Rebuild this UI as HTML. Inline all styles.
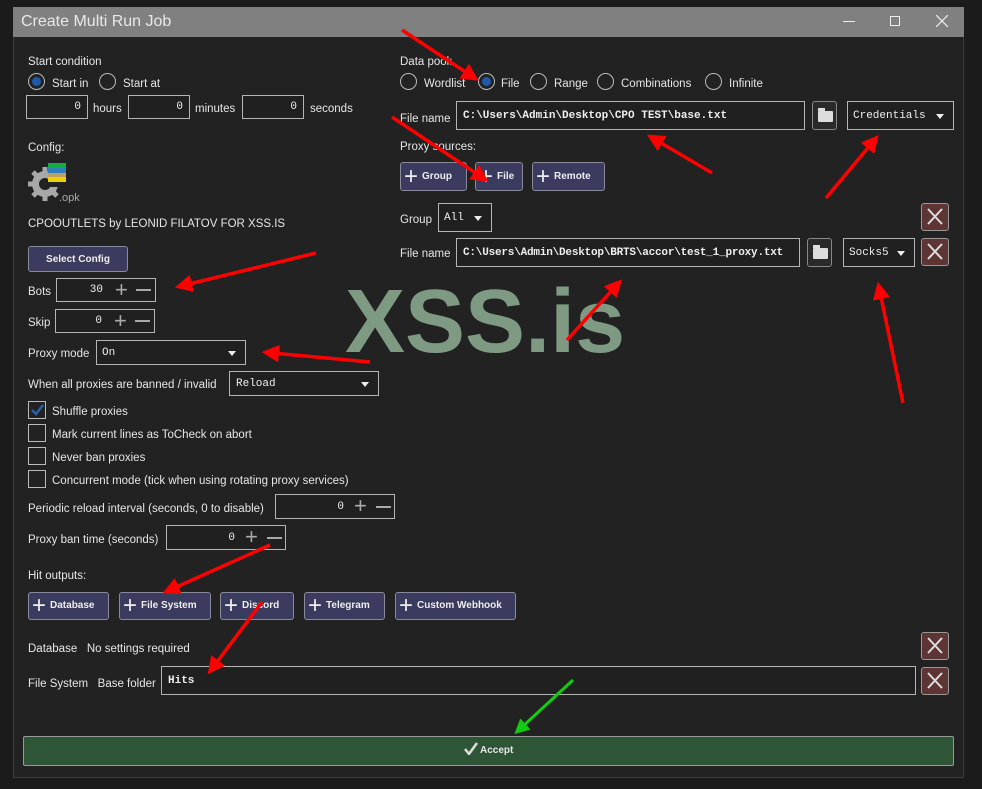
<!DOCTYPE html>
<html><head><meta charset="utf-8"><style>
*{box-sizing:border-box;margin:0;padding:0}
body{width:982px;height:789px;background:#1b1b1b;position:relative;overflow:hidden;font-family:"Liberation Sans",sans-serif;font-size:11.5px;color:#e6e6e6}
.a{position:absolute}
.win{left:13px;top:7px;width:951px;height:771px;background:#222;border:1px solid #3c3c3c}
.title{left:13px;top:7px;width:951px;height:30px;background:#808080;color:#e8e8e8;font-size:16px;line-height:30px;padding-left:8px}
.lbl{position:absolute;white-space:nowrap;line-height:14px;margin-top:1px}
.inp{position:absolute;border:1px solid #b5b5b5;background:#202020;font-family:"Liberation Mono",monospace;font-size:11px;color:#eee;white-space:nowrap;display:flex;align-items:center}
.rad{position:absolute;width:17px;height:17px;border:1px solid #bbb;border-radius:50%}
.rad.on::after{content:"";position:absolute;left:3px;top:3px;width:9px;height:9px;border-radius:50%;background:#1e5aa8}
.chk{position:absolute;width:18px;height:18px;border:1px solid #bbb}
.btn{position:absolute;background:#3b3a5f;border:1px solid #8a8a9a;border-radius:3px;color:#eee;font-weight:bold;font-size:10px;line-height:26px;white-space:nowrap}
.btn b{font-size:24px;font-weight:normal;vertical-align:-5px;margin:0 4px 0 3px;line-height:10px}
.x{position:absolute;width:28px;height:28px;background:#5e3535;border:1px solid #999;border-radius:3px}
.fold{position:absolute;background:#2a2a2a;border:1px solid #888;border-radius:3px}
.fold i{position:absolute;left:5px;top:9px;width:15px;height:11px;background:#ddd;border-radius:1px}
.fold i::before{content:"";position:absolute;left:0;top:-3px;width:7px;height:3px;background:#ddd}
.sel::after{content:"";position:absolute;right:9px;top:50%;margin-top:-2px;border:4px solid transparent;border-top:5px solid #eee}
.pm{position:absolute;color:#aaa;font-size:22px;top:0;line-height:22px;font-family:"Liberation Sans",sans-serif}
.mn{position:absolute;width:15px;height:2px;background:#aaa;top:50%;margin-top:-1px}
.num{position:absolute;text-align:right}
</style></head><body>
<div class="a win"></div>
<div class="a title">Create Multi Run Job</div>
<div class="a" style="left:843px;top:21px;width:12px;height:1px;background:#eee"></div>
<div class="a" style="left:890px;top:16px;width:10px;height:10px;border:1px solid #eee"></div>
<svg class="a" style="left:936px;top:15px" width="12" height="12"><path d="M0,0 L12,12 M12,0 L0,12" stroke="#eee" stroke-width="1.2"/></svg>

<div class="lbl" style="left:28px;top:54px">Start condition</div>
<div class="rad on" style="left:28px;top:73px"></div><div class="lbl" style="left:52px;top:76px">Start in</div>
<div class="rad" style="left:99px;top:73px"></div><div class="lbl" style="left:123px;top:76px">Start at</div>
<div class="inp" style="left:26px;top:95px;width:62px;height:24px"><span class="num" style="right:6px">0</span></div><div class="lbl" style="left:93px;top:101px">hours</div>
<div class="inp" style="left:128px;top:95px;width:62px;height:24px"><span class="num" style="right:6px">0</span></div><div class="lbl" style="left:195px;top:101px">minutes</div>
<div class="inp" style="left:242px;top:95px;width:62px;height:24px"><span class="num" style="right:6px">0</span></div><div class="lbl" style="left:310px;top:101px">seconds</div>

<div class="lbl" style="left:28px;top:140px">Config:</div>
<svg class="a" style="left:27px;top:161px" width="54" height="42"><g fill="#a8a8a8"><circle cx="18" cy="23" r="13"/><g stroke="#a8a8a8" stroke-width="5"><line x1="18" y1="6" x2="18" y2="40"/><line x1="1" y1="23" x2="35" y2="23"/><line x1="6" y1="11" x2="30" y2="35"/><line x1="30" y1="11" x2="6" y2="35"/></g></g><circle cx="18" cy="23" r="6" fill="#222"/><rect x="22" y="10" width="16" height="16" fill="#222"/><rect x="21" y="2" width="18" height="5" fill="#10b040"/><rect x="21" y="7" width="18" height="5" fill="#3080c0"/><rect x="21" y="12" width="18" height="4" fill="#c0a060"/><rect x="21" y="16" width="18" height="5" fill="#f0d000"/><text x="32" y="40" fill="#a8a8a8" font-size="11" font-family="Liberation Sans">.opk</text></svg>
<div class="lbl" style="left:28px;top:216px">CPOOUTLETS by LEONID FILATOV FOR XSS.IS</div>
<div class="btn" style="left:28px;top:246px;width:100px;height:26px;text-align:center">Select Config</div>

<div class="lbl" style="left:28px;top:284px">Bots</div>
<div class="inp" style="left:56px;top:278px;width:100px;height:24px"><span class="num" style="right:52px">30</span><span class="pm" style="left:58px">+</span><span class="mn" style="left:79px"></span></div>
<div class="lbl" style="left:28px;top:315px">Skip</div>
<div class="inp" style="left:55px;top:309px;width:100px;height:24px"><span class="num" style="right:52px">0</span><span class="pm" style="left:58px">+</span><span class="mn" style="left:79px"></span></div>
<div class="lbl" style="left:28px;top:346px">Proxy mode</div>
<div class="inp sel" style="left:96px;top:340px;width:150px;height:25px;padding-left:5px">On</div>
<div class="lbl" style="left:28px;top:377px">When all proxies are banned / invalid</div>
<div class="inp sel" style="left:229px;top:371px;width:150px;height:25px;padding-left:6px">Reload</div>
<div class="chk" style="left:28px;top:401px"></div><svg class="a" style="left:31px;top:404px" width="13" height="12"><path d="M1,6 L5,10 L12,1" stroke="#2a5fb0" stroke-width="2.5" fill="none"/></svg><div class="lbl" style="left:52px;top:404px">Shuffle proxies</div>
<div class="chk" style="left:28px;top:424px"></div><div class="lbl" style="left:52px;top:427px">Mark current lines as ToCheck on abort</div>
<div class="chk" style="left:28px;top:447px"></div><div class="lbl" style="left:52px;top:450px">Never ban proxies</div>
<div class="chk" style="left:28px;top:470px"></div><div class="lbl" style="left:52px;top:473px">Concurrent mode (tick when using rotating proxy services)</div>
<div class="lbl" style="left:28px;top:501px">Periodic reload interval (seconds, 0 to disable)</div>
<div class="inp" style="left:275px;top:494px;width:120px;height:25px"><span class="num" style="right:50px">0</span><span class="pm" style="left:78px">+</span><span class="mn" style="left:100px"></span></div>
<div class="lbl" style="left:28px;top:532px">Proxy ban time (seconds)</div>
<div class="inp" style="left:166px;top:525px;width:120px;height:25px"><span class="num" style="right:50px">0</span><span class="pm" style="left:78px">+</span><span class="mn" style="left:100px"></span></div>

<div class="lbl" style="left:28px;top:568px">Hit outputs:</div>
<div class="btn" style="left:28px;top:592px;width:81px;height:28px"><b>+</b>Database</div>
<div class="btn" style="left:119px;top:592px;width:92px;height:28px"><b>+</b>File System</div>
<div class="btn" style="left:220px;top:592px;width:74px;height:28px"><b>+</b>Discord</div>
<div class="btn" style="left:304px;top:592px;width:81px;height:28px"><b>+</b>Telegram</div>
<div class="btn" style="left:395px;top:592px;width:121px;height:28px"><b>+</b>Custom Webhook</div>
<div class="lbl" style="left:28px;top:641px">Database&nbsp;&nbsp;&nbsp;No settings required</div>
<div class="x" style="left:921px;top:632px"></div>
<div class="lbl" style="left:28px;top:676px">File System&nbsp;&nbsp;&nbsp;Base folder</div>
<div class="inp" style="left:161px;top:666px;width:755px;height:29px;padding-left:6px;font-weight:bold">Hits</div>
<div class="x" style="left:921px;top:667px"></div>
<div class="a" style="left:23px;top:736px;width:931px;height:30px;background:#2f5537;border:1px solid #999;border-radius:2px;text-align:center;line-height:28px;font-weight:bold;font-size:10px"><svg width="14" height="13" style="vertical-align:-2px"><path d="M1,7 L5,12 L13,1" stroke="#ddd" stroke-width="2.5" fill="none"/></svg> Accept</div>

<div class="lbl" style="left:400px;top:54px">Data pool:</div>
<div class="rad" style="left:400px;top:73px"></div><div class="lbl" style="left:424px;top:76px">Wordlist</div>
<div class="rad on" style="left:478px;top:73px"></div><div class="lbl" style="left:501px;top:76px">File</div>
<div class="rad" style="left:530px;top:73px"></div><div class="lbl" style="left:554px;top:76px">Range</div>
<div class="rad" style="left:597px;top:73px"></div><div class="lbl" style="left:621px;top:76px">Combinations</div>
<div class="rad" style="left:705px;top:73px"></div><div class="lbl" style="left:729px;top:76px">Infinite</div>
<div class="lbl" style="left:400px;top:111px">File name</div>
<div class="inp" style="left:456px;top:101px;width:349px;height:29px;padding-left:6px;font-weight:bold">C:\Users\Admin\Desktop\CPO TEST\base.txt</div>
<div class="fold" style="left:812px;top:101px;width:25px;height:29px"><i></i></div>
<div class="inp sel" style="left:847px;top:101px;width:107px;height:29px;padding-left:5px">Credentials</div>
<div class="lbl" style="left:400px;top:139px">Proxy sources:</div>
<div class="btn" style="left:400px;top:162px;width:67px;height:29px;line-height:27px"><b>+</b>Group</div>
<div class="btn" style="left:475px;top:162px;width:48px;height:29px;line-height:27px"><b>+</b>File</div>
<div class="btn" style="left:532px;top:162px;width:73px;height:29px;line-height:27px"><b>+</b>Remote</div>
<div class="lbl" style="left:400px;top:212px">Group</div>
<div class="inp sel" style="left:438px;top:203px;width:54px;height:29px;padding-left:5px">All</div>
<div class="x" style="left:921px;top:203px"></div>
<div class="lbl" style="left:400px;top:246px">File name</div>
<div class="inp" style="left:456px;top:238px;width:344px;height:29px;padding-left:6px;font-weight:bold;overflow:hidden;letter-spacing:-0.2px">C:\Users\Admin\Desktop\BRTS\accor\test_1_proxy.txt</div>
<div class="fold" style="left:807px;top:238px;width:25px;height:29px"><i></i></div>
<div class="inp sel" style="left:843px;top:238px;width:72px;height:29px;padding-left:5px">Socks5</div>
<div class="x" style="left:921px;top:238px"></div>

<div class="a" style="left:345px;top:272px;font-size:90px;font-weight:bold;color:#7f9a82;line-height:100px">XSS.is</div>

<svg class="a" style="left:0;top:0" width="982" height="789">
<g stroke="#ddd" stroke-width="2">
<path d="M928,209 L942,224 M942,209 L928,224"/>
<path d="M928,244 L942,259 M942,244 L928,259"/>
<path d="M928,638 L942,653 M942,638 L928,653"/>
<path d="M928,673 L942,688 M942,673 L928,688"/>
</g>
<defs><marker id="m" markerWidth="5" markerHeight="5" refX="2" refY="2.5" orient="auto"><path d="M0,0 L5,2.5 L0,5 z" fill="#f00"/></marker>
<marker id="g" markerWidth="5" markerHeight="5" refX="2" refY="2.5" orient="auto"><path d="M0,0 L5,2.5 L0,5 z" fill="#1c1"/></marker></defs>
<g stroke="#f00" stroke-width="3.5" marker-end="url(#m)">
<line x1="402" y1="30" x2="470" y2="75"/>
<line x1="392" y1="117" x2="480" y2="176"/>
<line x1="712" y1="173" x2="656" y2="140"/>
<line x1="826" y1="198" x2="872" y2="143"/>
<line x1="316" y1="253" x2="185" y2="285"/>
<line x1="567" y1="340" x2="615" y2="287"/>
<line x1="903" y1="403" x2="880" y2="292"/>
<line x1="370" y1="362" x2="272" y2="353"/>
<line x1="270" y1="545" x2="172" y2="589"/>
<line x1="262" y1="602" x2="214" y2="666"/>
</g>
<line x1="573" y1="680" x2="521" y2="728" stroke="#1c1" stroke-width="3" marker-end="url(#g)"/>
</svg>
</body></html>
